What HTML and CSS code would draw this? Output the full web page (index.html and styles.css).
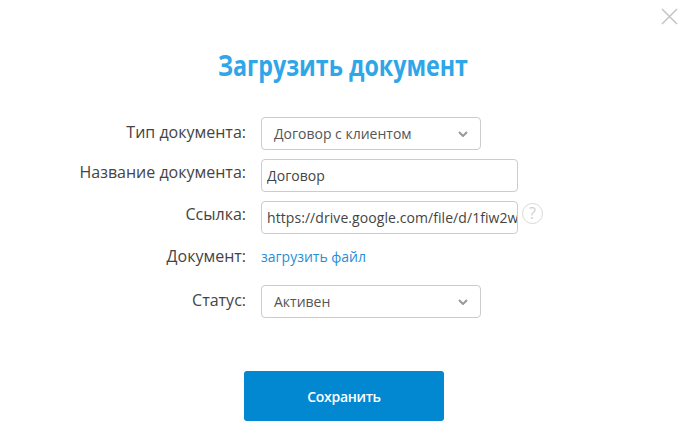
FILE: index.html
```html
<!DOCTYPE html>
<html lang="en">
<head>
    <meta charset="UTF-8">
    <meta name="viewport" content="width=device-width, initial-scale=1.0">
    <title>Загрузить документ</title>
    <link rel="stylesheet" href="styles.css">
</head>
<body>
    <div class="modal">
        <div class="modal-top">
            <a class="close-btn" href="#" aria-label="Закрыть">
                <svg width="17" height="17" viewBox="0 0 17 17"><path d="M1 1L16 16M16 1L1 16" stroke="#c4c4c4" stroke-width="1.5" fill="none"/></svg>
            </a>
        </div>

        <h1 class="modal-title">Загрузить документ</h1>

        <form class="doc-form">
            <div class="form-row">
                <label class="form-label">Тип документа:</label>
                <div class="select-box">
                    <span>Договор с клиентом</span>
                    <svg class="select-arrow" width="10" height="6" viewBox="0 0 10 6"><path d="M1 1L5 5L9 1" stroke="#999" stroke-width="2" fill="none"/></svg>
                </div>
            </div>
            <div class="form-row input-row">
                <label class="form-label">Название документа:</label>
                <input class="text-input" type="text" value="Договор">
            </div>
            <div class="form-row input-row">
                <label class="form-label">Ссылка:</label>
                <input class="text-input" type="text" value="https://drive.google.com/file/d/1fiw2wXkR8">
                <span class="help-icon">?</span>
            </div>
            <div class="form-row upload-row">
                <label class="form-label">Документ:</label>
                <a class="upload-link" href="#">загрузить файл</a>
            </div>
            <div class="form-row">
                <label class="form-label">Статус:</label>
                <div class="select-box">
                    <span>Активен</span>
                    <svg class="select-arrow" width="10" height="6" viewBox="0 0 10 6"><path d="M1 1L5 5L9 1" stroke="#999" stroke-width="2" fill="none"/></svg>
                </div>
            </div>
            <div class="form-actions">
                <button class="save-btn" type="button">Сохранить</button>
            </div>
        </form>
    </div>
</body>
</html>
```

FILE: styles.css
```css
body {
    margin: 0;
    background-color: #fff;
    font-family: 'Open Sans', Arial, sans-serif;
    color: #444;
}

.modal {
    width: 686px;
    height: 439px;
    overflow: hidden;
}

.modal-top {
    display: flex;
    justify-content: flex-end;
    padding: 8px 8px 0 0;
    height: 40px;
}

.close-btn {
    display: block;
    width: 17px;
    height: 17px;
}

.modal-title {
    margin: 0;
    height: 69px;
    color: #2fa6e8;
    font-size: 28px;
    font-weight: 700;
    line-height: 34px;
    text-align: center;
    transform: scaleX(0.83);
}

.form-row {
    display: flex;
    align-items: center;
    gap: 15px;
    height: 33px;
    margin-bottom: 9px;
}

.form-label {
    width: 246px;
    margin-bottom: 4px;
    font-size: 16px;
    text-align: right;
}

.input-row .form-label {
    margin-bottom: 8px;
}

.select-box {
    display: flex;
    align-items: center;
    justify-content: space-between;
    box-sizing: border-box;
    width: 220px;
    height: 33px;
    padding: 0 12px;
    border: 1px solid #ccc;
    border-radius: 4px;
    font-size: 14px;
    color: #555;
}

.text-input {
    box-sizing: border-box;
    width: 257px;
    height: 33px;
    padding: 0 0 0 5px;
    border: 1px solid #ccc;
    border-radius: 4px;
    font-family: inherit;
    font-size: 14px;
    letter-spacing: 0.07px;
    color: #444;
}

.help-icon {
    box-sizing: border-box;
    width: 21px;
    height: 21px;
    margin-left: -11px;
    margin-bottom: 8px;
    border: 1px solid #d8d8d8;
    border-radius: 50%;
    color: #d0d0d0;
    font-size: 16px;
    line-height: 19px;
    text-align: center;
}

.upload-row {
    height: 28px;
    margin-bottom: 14px;
}

.upload-row .form-label {
    margin-bottom: 2px;
}

.upload-link {
    margin-bottom: 2px;
    color: #1f8fd6;
    font-size: 14px;
    text-decoration: none;
}

.form-actions {
    display: flex;
    justify-content: center;
    margin-top: 53px;
    padding-left: 2px;
}

.save-btn {
    width: 200px;
    height: 50px;
    background-color: #0288d1;
    color: #fff;
    border: none;
    border-radius: 3px;
    font-family: inherit;
    font-size: 14px;
    font-weight: 600;
    letter-spacing: -0.3px;
}
```
